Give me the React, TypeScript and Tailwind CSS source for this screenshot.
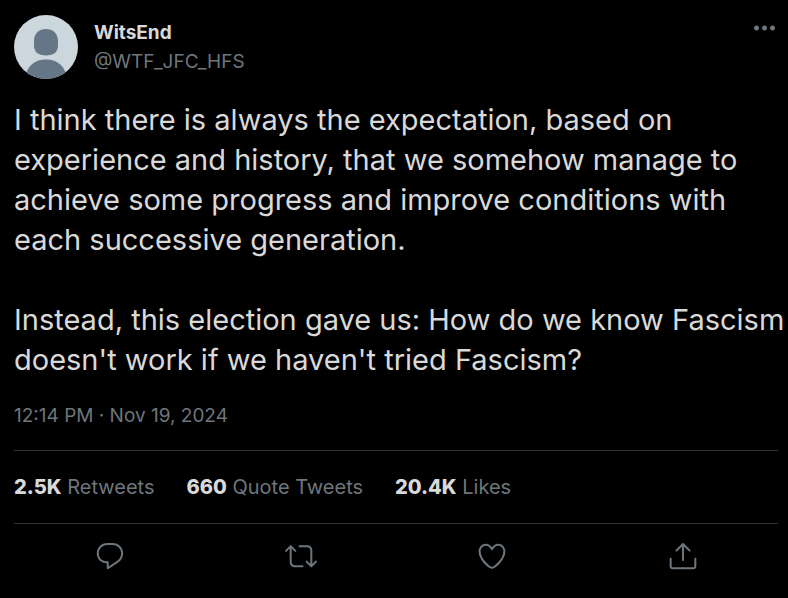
import React from "react";

const stats = [
  { value: "2.5K", label: "Retweets" },
  { value: "660", label: "Quote Tweets" },
  { value: "20.4K", label: "Likes" },
];

const actions = [
  {
    name: "Reply",
    path: "M14.046 2.242l-4.148-.01h-.002c-4.374 0-7.8 3.427-7.8 7.802 0 4.098 3.186 7.206 7.465 7.37v3.828c0 .108.044.286.12.403.142.225.384.347.632.347.138 0 .277-.038.402-.118.264-.168 6.473-4.14 8.088-5.506 1.902-1.61 3.04-3.97 3.043-6.312v-.017c-.006-4.367-3.43-7.787-7.8-7.788zm3.787 12.972c-1.134.96-4.862 3.405-6.772 4.643V16.67c0-.414-.335-.75-.75-.75h-.396c-3.66 0-6.318-2.476-6.318-5.886 0-3.534 2.768-6.302 6.3-6.302l4.147.01h.002c3.532 0 6.3 2.766 6.302 6.296-.003 1.91-.942 3.844-2.514 5.176z",
  },
  {
    name: "Retweet",
    path: "M23.77 15.67c-.292-.293-.767-.293-1.06 0l-2.22 2.22V7.65c0-2.068-1.683-3.75-3.75-3.75h-5.85c-.414 0-.75.336-.75.75s.336.75.75.75h5.85c1.24 0 2.25 1.01 2.25 2.25v10.24l-2.22-2.22c-.293-.293-.768-.293-1.06 0s-.294.768 0 1.06l3.5 3.5c.145.147.337.22.53.22s.383-.072.53-.22l3.5-3.5c.294-.292.294-.767 0-1.06zm-10.66 3.28H7.26c-1.24 0-2.25-1.01-2.25-2.25V6.46l2.22 2.22c.148.147.34.22.532.22s.384-.073.53-.22c.293-.293.293-.768 0-1.06l-3.5-3.5c-.293-.294-.768-.294-1.06 0l-3.5 3.5c-.294.292-.294.767 0 1.06s.767.293 1.06 0l2.22-2.22V16.7c0 2.068 1.683 3.75 3.75 3.75h5.85c.414 0 .75-.336.75-.75s-.337-.75-.75-.75z",
  },
  {
    name: "Like",
    path: "M12 21.638h-.014C9.403 21.59 1.95 14.856 1.95 8.478c0-3.064 2.525-5.754 5.403-5.754 2.29 0 3.83 1.58 4.646 2.73.814-1.148 2.354-2.73 4.645-2.73 2.88 0 5.404 2.69 5.404 5.755 0 6.376-7.454 13.11-10.037 13.157H12zM7.354 4.225c-2.08 0-3.903 1.988-3.903 4.255 0 5.74 7.034 11.596 8.55 11.658 1.518-.062 8.55-5.917 8.55-11.658 0-2.267-1.823-4.255-3.903-4.255-2.528 0-3.94 2.936-3.952 2.965-.23.562-1.156.562-1.387 0-.014-.03-1.425-2.965-3.954-2.965z",
  },
  {
    name: "Share",
    path: "M17.53 7.47l-5-5c-.293-.293-.768-.293-1.06 0l-5 5c-.294.293-.294.768 0 1.06s.767.294 1.06 0l3.72-3.72V15c0 .414.336.75.75.75s.75-.336.75-.75V4.81l3.72 3.72c.146.147.338.22.53.22s.384-.072.53-.22c.293-.293.293-.767 0-1.06zM19.708 21.944H4.292C3.028 21.944 2 20.916 2 19.652V14c0-.414.336-.75.75-.75s.75.336.75.75v5.652c0 .437.355.792.792.792h15.416c.437 0 .792-.355.792-.792V14c0-.414.336-.75.75-.75s.75.336.75.75v5.652c0 1.264-1.028 2.292-2.292 2.292z",
  },
];

const Avatar = () => (
  <svg viewBox="0 0 64 64" className="h-16 w-16 shrink-0 rounded-full">
    <rect width="64" height="64" fill="#ccd6dd" />
    <path
      d="M32 14c7 0 12 4.500 12 12v4c0 7-4 10.500-12 10.500S20 37 20 30v-4c0-7.500 5-12 12-12z"
      fill="#657786"
    />
    <path d="M11 64c1-12 9-19.500 21-19.500S52 52 53 64z" fill="#657786" />
  </svg>
);

const App = () => {
  return (
    <div className="min-h-screen bg-black pt-[15px] pr-[10px] pl-[14px] font-[Inter,sans-serif] text-[#d9d9d9]">
      <article>
        <header className="flex items-start gap-4">
          <Avatar />
          <div className="flex-1 pt-[3px] text-[19px] leading-[29px]">
            <p className="font-bold">WitsEnd</p>
            <p className="text-[#6e767d]">@WTF_JFC_HFS</p>
          </div>
          <button aria-label="More" className="pt-[10px] text-[#6e767d]">
            <svg viewBox="0 0 24 6" className="h-[6px] w-6" fill="currentColor">
              <circle cx="2.500" cy="3" r="2.500" />
              <circle cx="10.500" cy="3" r="2.500" />
              <circle cx="18.500" cy="3" r="2.500" />
            </svg>
          </button>
        </header>
        <div className="mt-[21px] text-[29px] leading-[40px]">
          <p>
            I think there is always the expectation, based on
            <br />
            experience and history, that we somehow manage to
            <br />
            achieve some progress and improve conditions with
            <br />
            each successive generation.
          </p>
          <p className="mt-10 whitespace-nowrap">
            Instead, this election gave us: How do we know Fascism
            <br />
            doesn't work if we haven't tried Fascism?
          </p>
        </div>
        <p className="mt-[21px] text-[19px] leading-[30px] text-[#6e767d]">
          12:14 PM · Nov 19, 2024
        </p>
        <div className="mt-[19px] flex gap-8 border-y border-[#2f3336] py-[21px] text-[20px] leading-[30px]">
          {stats.map((stat) => (
            <a key={stat.label} href="#">
              <span className="font-extrabold">{stat.value}</span>{" "}
              <span className="text-[#6e767d]">{stat.label}</span>
            </a>
          ))}
        </div>
        <div className="flex justify-around pt-4 text-[#6e767d]">
          {actions.map((action) => (
            <button key={action.name} aria-label={action.name}>
              <svg viewBox="0 0 24 24" className="h-8 w-8" fill="currentColor">
                <path d={action.path} />
              </svg>
            </button>
          ))}
        </div>
      </article>
    </div>
  );
};

export default App;
